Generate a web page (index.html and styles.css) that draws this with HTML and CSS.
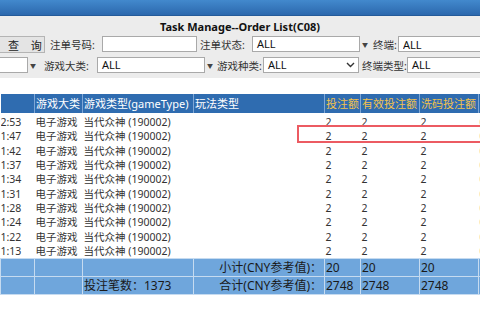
FILE: index.html
```html
<!DOCTYPE html>
<html>

<head>
    <link rel="stylesheet" href="styles.css">
</head>

<body>
    <div class="topbar"></div>

    <div class="panel">
        <div class="title">Task Manage--Order List(C08)</div>

        <!-- first filter row -->
        <div class="filters">
            <button class="btn-search">查 询</button>
            <span class="lbl lbl-order">注单号码:</span>
            <input type="text" class="txt txt-order">
            <span class="lbl lbl-status">注单状态:</span>
            <span class="combo"><span class="field field-status">ALL</span><span class="arrow">&#9660;</span></span>
            <span class="lbl lbl-term">终端:</span>
            <input type="text" class="txt txt-term" value="ALL">
        </div>

        <!-- second filter row -->
        <div class="filters">
            <span class="combo"><span class="field field-cut"></span><span class="arrow">&#9660;</span></span>
            <span class="lbl lbl-cat">游戏大类:</span>
            <span class="combo"><span class="field field-cat">ALL</span><span class="arrow">&#9660;</span></span>
            <span class="lbl lbl-kind">游戏种类:</span>
            <span class="field field-kind">ALL
                <svg class="chev" width="9" height="6" viewBox="0 0 9 6"><path d="M1 1 L4.5 4.5 L8 1" fill="none" stroke="#333" stroke-width="1.4"/></svg>
            </span>
            <span class="lbl lbl-ttype">终端类型:</span>
            <span class="field field-ttype">ALL</span>
        </div>
    </div>

    <div class="grid-wrap">
        <table class="grid">
            <colgroup>
                <col style="width:34px">
                <col style="width:48px">
                <col style="width:111px">
                <col style="width:131px">
                <col style="width:36px">
                <col style="width:59px">
                <col style="width:59px">
                <col style="width:60px">
            </colgroup>
            <thead>
                <tr>
                    <th></th>
                    <th>游戏大类</th>
                    <th>游戏类型(gameType)</th>
                    <th>玩法类型</th>
                    <th class="gold">投注额</th>
                    <th class="gold">有效投注额</th>
                    <th class="gold">洗码投注额</th>
                    <th class="gold">派彩</th>
                </tr>
            </thead>
            <tbody id="rows"></tbody>
            <tfoot>
                <tr>
                    <td></td>
                    <td></td>
                    <td></td>
                    <td class="sum-label">小计(CNY参考值)：</td>
                    <td>20</td>
                    <td>20</td>
                    <td>20</td>
                    <td>20</td>
                </tr>
                <tr>
                    <td></td>
                    <td></td>
                    <td>投注笔数：1373</td>
                    <td class="sum-label">合计(CNY参考值)：</td>
                    <td>2748</td>
                    <td>2748</td>
                    <td>2748</td>
                    <td>2748</td>
                </tr>
            </tfoot>
        </table>
        <!-- highlight box over the second row -->
        <div class="mark"></div>
    </div>

    <script>
        var times = ['2:53', '1:47', '1:42', '1:37', '1:34', '1:31', '1:28', '1:24', '1:22', '1:13'];
        var body = document.getElementById('rows');

        for (var i = 0; i < times.length; i++) {
            var row = `<tr>
                           <td>${times[i]}</td>
                           <td>电子游戏</td>
                           <td>当代众神 (190002)</td>
                           <td></td>
                           <td>2</td>
                           <td>2</td>
                           <td>2</td>
                           <td class="gold-txt">0</td>
                       </tr>`;
            body.innerHTML += row;
        }
    </script>
</body>

</html>
```

FILE: styles.css
```css
body {
    font-family: "Noto Sans", "Noto Sans CJK SC", sans-serif;
    background-color: #fff;
    margin: 0;
    width: 480px;
    overflow: hidden;
}

.topbar {
    height: 16px;
    background: linear-gradient(#4289cd, #2c68ad);
    border-bottom: 1px solid #245a99;
    box-sizing: border-box;
}

.panel {
    background-color: #ececec;
    padding-bottom: 1px;
}

.title {
    height: 19px;
    line-height: 21px;
    text-align: center;
    font-weight: bold;
    font-size: 11px;
    color: #111;
}

.filters {
    display: flex;
    align-items: center;
    height: 18px;
    margin-bottom: 3px;
    white-space: nowrap;
    font-size: 10.5px;
    color: #333;
}

.btn-search {
    width: 45px;
    height: 17px;
    padding: 0 0 0 8px;
    border: 1px solid #b4b4b4;
    border-left: none;
    background-color: #e4e4e4;
    font-family: inherit;
    font-size: 11px;
    letter-spacing: 4.5px;
    text-align: left;
    color: #222;
}

.lbl {
    display: block;
    flex: none;
}

.lbl-order { width: 52px; margin-left: 5px; }
.lbl-status { width: 52px; margin-left: 3px; }
.lbl-term { width: 25px; margin-left: 3px; }
.lbl-cat { width: 53px; margin-left: 6px; }
.lbl-kind { width: 46px; margin-left: 2px; }
.lbl-ttype { width: 45px; margin-left: 3px; }

.txt,
.field {
    display: block;
    flex: none;
    height: 16px;
    line-height: 14px;
    padding: 0 4px;
    border: 1px solid #a9a9a9;
    background-color: #fff;
    box-sizing: border-box;
    font-family: inherit;
    font-size: 11px;
    color: #111;
}

.txt-order { width: 95px; }
.txt-term { width: 90px; }

.combo {
    display: flex;
    align-items: center;
    flex: none;
}

.arrow {
    width: 10px;
    font-size: 6px;
    text-align: center;
    color: #444;
}

.field-status { width: 108px; }
.field-cut { width: 28px; border-left: none; }
.field-cat { width: 108px; }

.field-kind {
    width: 96px;
    position: relative;
}

.chev {
    position: absolute;
    right: 3px;
    top: 4px;
}

.field-ttype { width: 80px; }

.grid-wrap {
    position: relative;
    margin-top: 16px;
    width: 480px;
    overflow: hidden;
}

.grid {
    table-layout: fixed;
    width: 538px;
    border-collapse: collapse;
    font-size: 10.5px;
}

.grid th,
.grid td {
    padding: 0 0 0 1px;
    text-align: left;
    white-space: nowrap;
    overflow: hidden;
}

.grid th {
    height: 19px;
    line-height: 17px;
    background-color: #2f6cb0;
    color: #fff;
    font-weight: normal;
    font-size: 11px;
    border-left: 1px solid #7fa7d6;
}

.grid th:first-child {
    border-left: none;
}

.grid th.gold {
    color: #f3c24c;
}

.grid tbody td {
    height: 14.3px;
    line-height: 14px;
    color: #333;
}

.grid tbody tr:first-child td {
    padding-top: 2px;
}

.grid tbody td:first-child {
    padding-left: 0;
}

.gold-txt {
    color: #e7b431;
}

.grid tfoot td {
    height: 17px;
    line-height: 15px;
    background-color: #6fa6dc;
    color: #1a1a1a;
    font-size: 12px;
    border: 1px solid #c6dbf0;
}

.grid tfoot td.sum-label {
    text-align: right;
    padding-right: 2px;
}

.mark {
    position: absolute;
    left: 297px;
    top: 31px;
    width: 200px;
    height: 18px;
    border: 2px solid #ec5b62;
    box-sizing: border-box;
}
```
